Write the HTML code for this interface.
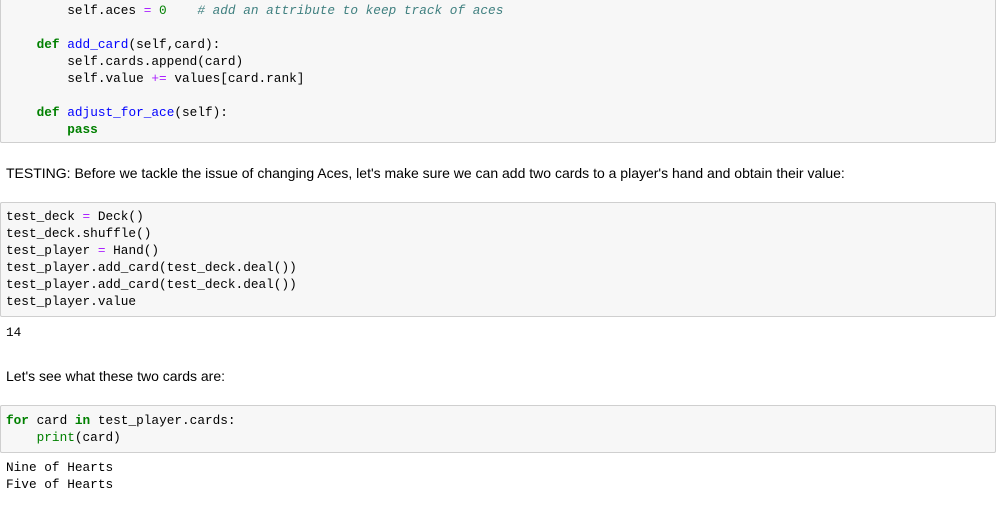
<!DOCTYPE html>
<html><head><style>
body{margin:0;width:999px;height:521px;background:#fff;position:relative;overflow:hidden}
.box{position:absolute;left:0;width:994px;background:#f7f7f7;border:1px solid #cfcfcf;border-radius:2px}
pre{position:absolute;left:6px;margin:0;font-family:"Liberation Mono",monospace;font-size:12.75px;line-height:17px;color:#000}
.t{position:absolute;left:6px;font-family:"Liberation Sans",sans-serif;font-size:14px;color:#000;line-height:17px}
.k{color:#008000;font-weight:bold}.f{color:#0000ff}.o{color:#aa22ff}.n{color:#008000}.c{color:#408080;font-style:italic}.b{color:#008000}
</style></head><body>
<div class="box" style="top:-10px;height:151px"></div>
<pre style="top:1.5px">        self.aces <span class="o">=</span> <span class="n">0</span>    <span class="c"># add an attribute to keep track of aces</span>

    <span class="k">def</span> <span class="f">add_card</span>(self,card):
        self.cards.append(card)
        self.value <span class="o">+=</span> values[card.rank]

    <span class="k">def</span> <span class="f">adjust_for_ace</span>(self):
        <span class="k">pass</span></pre>
<div class="t" style="top:164.5px">TESTING: Before we tackle the issue of changing Aces, let's make sure we can add two cards to a player's hand and obtain their value:</div>
<div class="box" style="top:202px;height:113px"></div>
<pre style="top:207.5px">test_deck <span class="o">=</span> Deck()
test_deck.shuffle()
test_player <span class="o">=</span> Hand()
test_player.add_card(test_deck.deal())
test_player.add_card(test_deck.deal())
test_player.value</pre>
<pre style="top:323.5px">14</pre>
<div class="t" style="top:367.5px">Let's see what these two cards are:</div>
<div class="box" style="top:405px;height:46px"></div>
<pre style="top:411.5px"><span class="k">for</span> card <span class="k">in</span> test_player.cards:
    <span class="b">print</span>(card)</pre>
<pre style="top:458.5px">Nine of Hearts
Five of Hearts</pre>
</body></html>
